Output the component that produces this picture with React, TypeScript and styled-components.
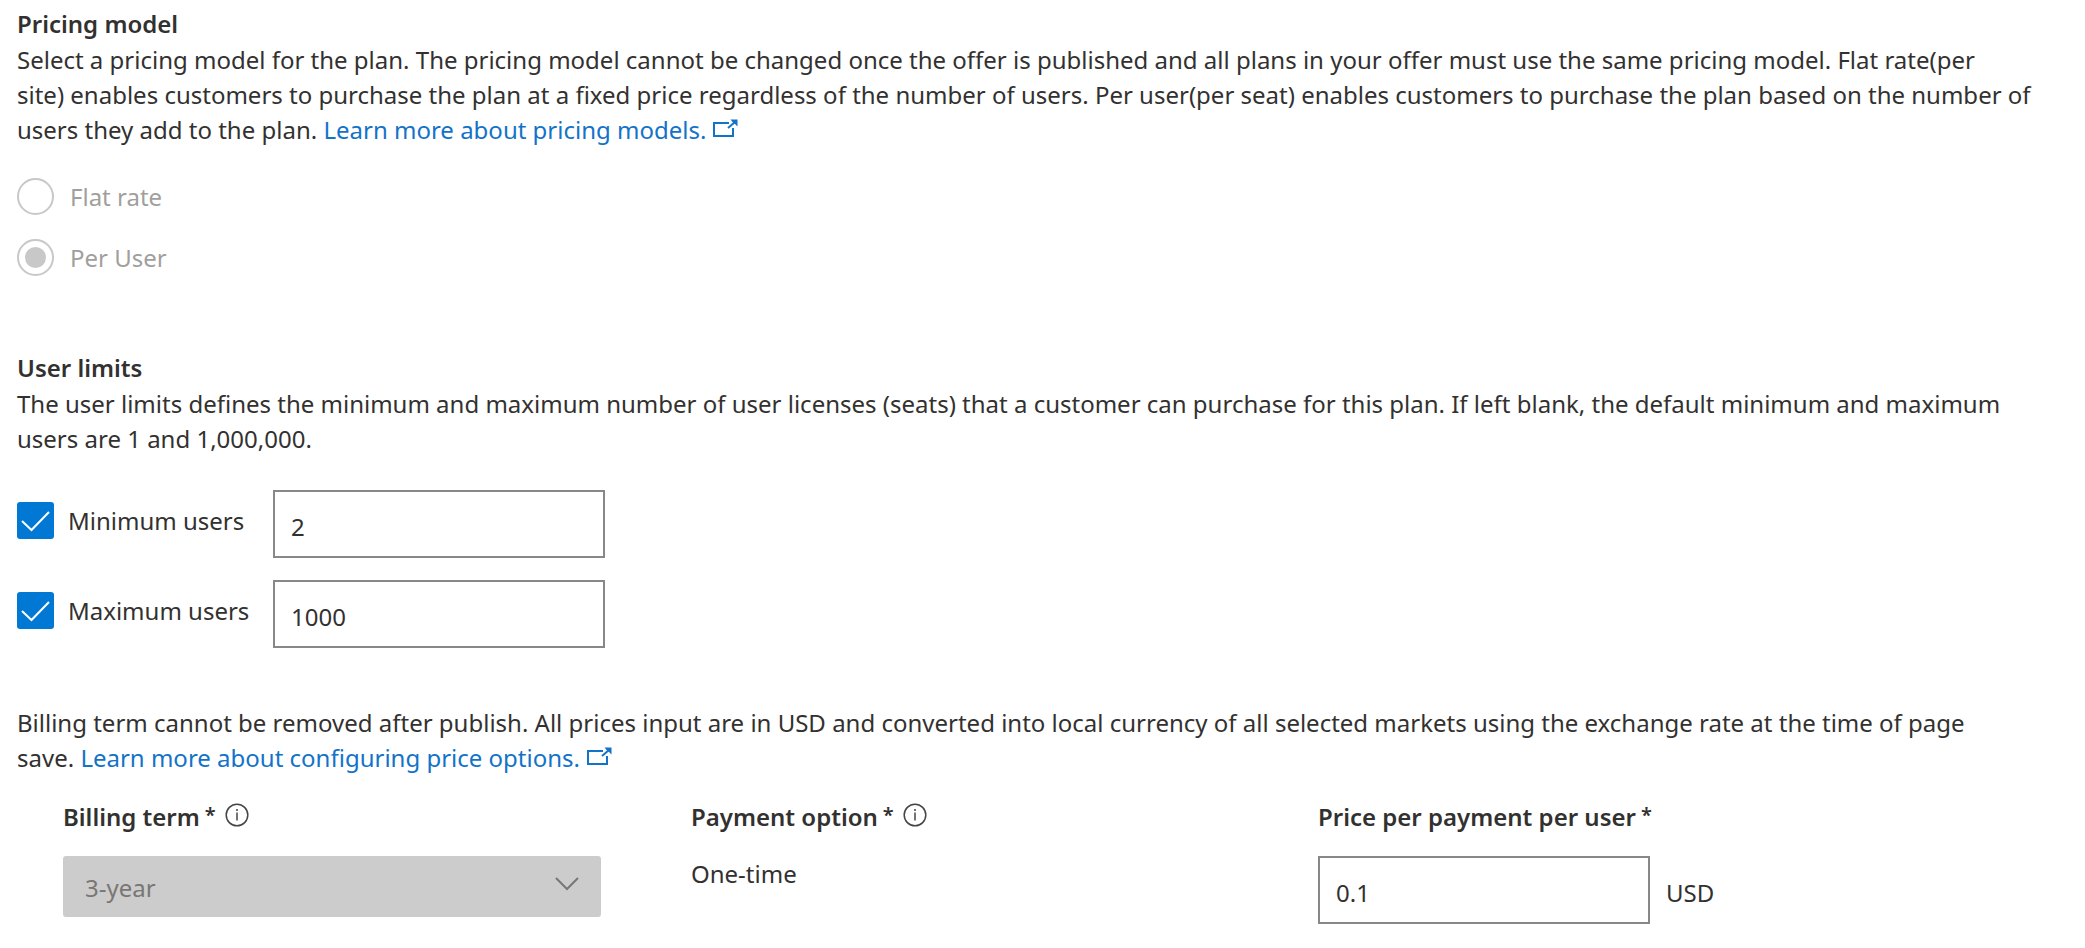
import React from 'react';
import styled, { createGlobalStyle } from 'styled-components';

const font = `'Noto Sans', 'Open Sans', sans-serif`;

const GlobalStyle = createGlobalStyle`
  *, *::before, *::after { box-sizing: border-box; }
  body {
    margin: 0;
    background: #fff;
    color: #323130;
    font: 400 24px/35px ${font};
  }
  input, select, button { font: inherit; color: inherit; }
`;

const Page = styled.main`
  padding: 6px 4px 24px 17px;
`;

const Section = styled.section<{ $gap: number }>`
  margin-bottom: ${(p) => p.$gap}px;
`;

const Heading = styled.h2`
  margin: 0;
  font-size: 24px;
  font-weight: 600;
  line-height: 36px;
`;

const Text = styled.p`
  margin: 0;
`;

const Link = styled.a`
  color: #1373c8;
  text-decoration: none;
`;

const LinkIcon = styled.svg`
  width: 25px;
  height: 18px;
  margin: 0 0 2px 7px;
`;

const RadioGroup = styled.div`
  display: flex;
  flex-direction: column;
  gap: 24px;
  margin-top: 31px;
`;

const Option = styled.label<{ $disabled?: boolean }>`
  display: flex;
  align-items: center;
  gap: ${(p) => (p.$disabled ? 16 : 14)}px;
  height: 37px;
  color: ${(p) => (p.$disabled ? '#a19f9d' : 'inherit')};
`;

const Radio = styled.input`
  appearance: none;
  display: grid;
  place-items: center;
  width: 37px;
  height: 37px;
  margin: 0;
  border: 2px solid #c8c8c8;
  border-radius: 50%;

  &:checked::before {
    content: '';
    width: 21px;
    height: 21px;
    border-radius: 50%;
    background: #c8c8c8;
  }
`;

const LimitGrid = styled.div`
  display: grid;
  grid-template-columns: 256px 332px;
  row-gap: 22px;
  margin-top: 34px;

  & > label { margin-top: 12px; }
`;

const CheckShell = styled.span`
  display: grid;
  width: 37px;
  height: 37px;

  & > * { grid-area: 1 / 1; }
`;

const Checkbox = styled.input`
  appearance: none;
  width: 37px;
  height: 37px;
  margin: 0;
  border-radius: 3px;
  background: #0078d4;
`;

const CheckMark = styled.svg`
  width: 37px;
  height: 37px;
  pointer-events: none;
`;

const TextBox = styled.input`
  width: 332px;
  height: 68px;
  padding: 5px 16px 0;
  border: 2px solid #8a8886;
  border-radius: 0;
  background: #fff;
`;

const Columns = styled.div`
  display: grid;
  grid-template-columns: 628px 627px 1fr;
  margin: 24px 0 0 46px;
`;

const Field = styled.div`
  display: flex;
  flex-direction: column;
  align-items: flex-start;
  gap: 22px;
`;

const FieldHeader = styled.div`
  display: flex;
  align-items: center;
  height: 35px;
`;

const FieldLabel = styled.label`
  font-size: 24px;
  font-weight: 600;
`;

const Star = styled.span`
  margin-left: 5px;
  font-size: 20px;
  line-height: 20px;
  vertical-align: 4px;
`;

const InfoButton = styled.button`
  display: flex;
  margin: 0 0 4px 9px;
  padding: 0;
  border: 0;
  background: none;
`;

const SelectShell = styled.div`
  display: grid;
  align-items: center;
  width: 538px;

  & > * { grid-area: 1 / 1; }
`;

const Select = styled.select`
  appearance: none;
  width: 100%;
  height: 61px;
  padding: 2px 22px 0;
  border: 0;
  border-radius: 3px;
  background: #ccc;
  color: #797775;
  opacity: 1;
`;

const Chevron = styled.svg`
  justify-self: end;
  width: 26px;
  height: 16px;
  margin: 0 21px 6px 0;
  pointer-events: none;
`;

const Value = styled.output`
  line-height: 35px;
`;

const PriceRow = styled.div`
  display: flex;
  align-items: center;
  gap: 16px;
`;

const Unit = styled.span`
  padding-top: 5px;
`;

const ExternalIcon = () => (
  <LinkIcon viewBox="0 0 25 18" fill="none" stroke="#1373c8" strokeWidth="2" aria-hidden="true">
    <path d="M16 4H1V17H20V9" />
    <path d="M15 9L22 3" />
    <path d="M17.5 0.5H24.5V7.5L22 5L19.5 3Z" fill="#1373c8" stroke="none" />
  </LinkIcon>
);

const Info = ({ about }: { about: string }) => (
  <InfoButton type="button" aria-label={`About ${about}`}>
    <svg width="24" height="24" viewBox="0 0 24 24" fill="none" stroke="#484644" strokeWidth="1.5" aria-hidden="true">
      <circle cx="12" cy="12" r="10.8" />
      <path d="M12 9.5V17.5M12 6V8" />
    </svg>
  </InfoButton>
);

const Limit = ({ id, label, value }: { id: string; label: string; value: string }) => (
  <>
    <Option>
      <CheckShell>
        <Checkbox type="checkbox" defaultChecked />
        <CheckMark viewBox="0 0 37 37" fill="none" stroke="#fff" strokeWidth="2" aria-hidden="true">
          <path d="M5 19L14.5 28L32 10" />
        </CheckMark>
      </CheckShell>
      {label}
    </Option>
    <TextBox id={id} aria-label={label} defaultValue={value} />
  </>
);

export default function App() {
  return (
    <>
      <GlobalStyle />
      <Page>
        <Section $gap={74}>
          <Heading>Pricing model</Heading>
          <Text>
            Select a pricing model for the plan. The pricing model cannot be changed once the offer is published and all
            plans in your offer must use the same pricing model. Flat rate(per
            <br />
            site) enables customers to purchase the plan at a fixed price regardless of the number of users. Per user(per
            seat) enables customers to purchase the plan based on the number of
            <br />
            users they add to the plan.{' '}
            <Link href="#pricing-models">
              Learn more about pricing models.
              <ExternalIcon />
            </Link>
          </Text>
          <RadioGroup role="radiogroup" aria-label="Pricing model">
            <Option $disabled>
              <Radio type="radio" name="pricing" disabled />
              Flat rate
            </Option>
            <Option $disabled>
              <Radio type="radio" name="pricing" disabled defaultChecked />
              Per User
            </Option>
          </RadioGroup>
        </Section>

        <Section $gap={57}>
          <Heading>User limits</Heading>
          <Text>
            The user limits defines the minimum and maximum number of user licenses (seats) that a customer can purchase
            for this plan. If left blank, the default minimum and maximum
            <br />
            users are 1 and 1,000,000.
          </Text>
          <LimitGrid>
            <Limit id="min-users" label="Minimum users" value="2" />
            <Limit id="max-users" label="Maximum users" value="1000" />
          </LimitGrid>
        </Section>

        <Section $gap={0}>
          <Text>
            Billing term cannot be removed after publish. All prices input are in USD and converted into local currency
            of all selected markets using the exchange rate at the time of page
            <br />
            save.{' '}
            <Link href="#price-options">
              Learn more about configuring price options.
              <ExternalIcon />
            </Link>
          </Text>
          <Columns>
            <Field>
              <FieldHeader>
                <FieldLabel htmlFor="term">
                  Billing term<Star>*</Star>
                </FieldLabel>
                <Info about="billing term" />
              </FieldHeader>
              <SelectShell>
                <Select id="term" disabled defaultValue="3">
                  <option value="3">3-year</option>
                </Select>
                <Chevron viewBox="0 0 26 16" fill="none" stroke="#797775" strokeWidth="2" aria-hidden="true">
                  <path d="M2 2L13 13L24 2" />
                </Chevron>
              </SelectShell>
            </Field>
            <Field>
              <FieldHeader>
                <FieldLabel htmlFor="payment">
                  Payment option<Star>*</Star>
                </FieldLabel>
                <Info about="payment option" />
              </FieldHeader>
              <Value id="payment">One-time</Value>
            </Field>
            <Field>
              <FieldHeader>
                <FieldLabel htmlFor="price">
                  Price per payment per user<Star>*</Star>
                </FieldLabel>
              </FieldHeader>
              <PriceRow>
                <TextBox id="price" defaultValue="0.1" />
                <Unit>USD</Unit>
              </PriceRow>
            </Field>
          </Columns>
        </Section>
      </Page>
    </>
  );
}
